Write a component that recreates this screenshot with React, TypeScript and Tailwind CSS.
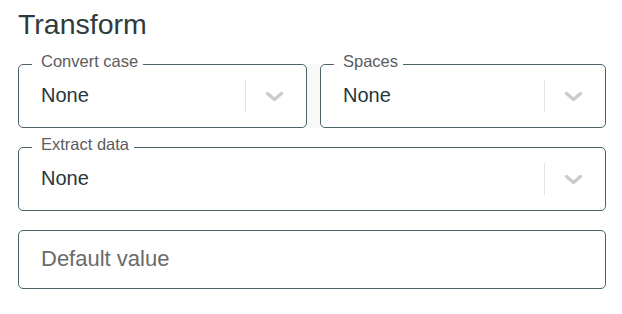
import React from "react";

const font = { fontFamily: '"Liberation Sans", Arial, sans-serif' };

const Chevron = () => (
  <svg width="19" height="11" viewBox="0 0 19 11" fill="none">
    <polyline
      points="2.5,2.5 9.5,8.5 16.5,2.5"
      stroke="#cbcbcb"
      strokeWidth="3.4"
      strokeLinecap="round"
      strokeLinejoin="round"
    />
  </svg>
);

const SelectField = ({ label, value, className = "" }: { label: string; value: string; className?: string }) => (
  <div className={`relative h-[64px] rounded-[5px] border border-[#4b6369] flex items-center ${className}`}>
    <span className="absolute left-[13px] top-[-12px] bg-white pl-[9px] pr-[5px] text-[16.5px] leading-[16px] text-[#5c5c5c]">
      {label}
    </span>
    <span className="flex-1 pl-[22px] pb-[3px] text-[20px] leading-[20px] text-[#26363a]">{value}</span>
    <div className="w-px h-[32px] bg-[#e3e3e3]" />
    <div className="pl-[19px] pr-[22px] flex items-center">
      <Chevron />
    </div>
  </div>
);

export default function App() {
  return (
    <div className="w-[622px] h-[314px] bg-white pl-[18px] pr-[16px]" style={font}>
      <h2 className="pt-[9px] h-[64px] text-[28.5px] leading-[30px] text-[#2e3b3e]">Transform</h2>
      <div className="flex">
        <SelectField label="Convert case" value="None" className="w-[289px]" />
        <div className="w-[13px] h-[64px] bg-[#f8f8f8]" />
        <SelectField label="Spaces" value="None" className="flex-1" />
      </div>
      <SelectField label="Extract data" value="None" className="mt-[19px]" />
      <div className="mt-[19px] h-[59px] rounded-[5px] border border-[#4b6369] flex items-center pl-[22px]">
        <span className="pb-[1px] text-[22px] leading-[22px] text-[#6b6b6b]">Default value</span>
      </div>
    </div>
  );
}
